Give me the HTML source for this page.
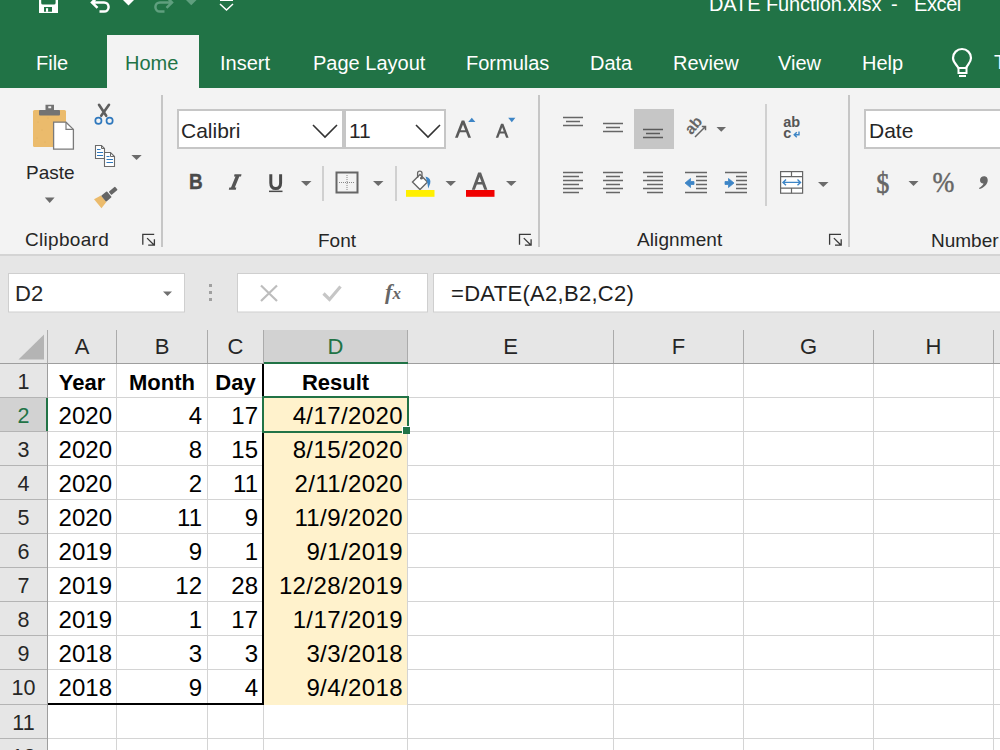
<!DOCTYPE html>
<html><head><meta charset="utf-8">
<style>
*{margin:0;padding:0;box-sizing:border-box}
html,body{width:1000px;height:750px;overflow:hidden;background:#fff;font-family:"Liberation Sans",sans-serif}
.abs{position:absolute}
#title{left:0;top:0;width:1000px;height:88px;background:#217346}
.tab{position:absolute;top:51px;color:#fff;font-size:20px;line-height:24px;white-space:nowrap}
#hometab{left:107px;top:35px;width:92px;height:53px;background:#f3f3f3}
#ribbon{left:0;top:88px;width:1000px;height:167px;background:#f3f3f3;border-bottom:1px solid #d5d5d5}
#fbar{left:0;top:255px;width:1000px;height:75px;background:#e6e6e6}
.box{position:absolute;background:#fff;border:1px solid #c6c6c6}
.lbl{position:absolute;font-size:18px;color:#262626;white-space:nowrap}
.sep{position:absolute;width:2px;background:#c8c8c8}
#grid{left:0;top:330px;width:1000px;height:420px;background:#fff}
.ch{position:absolute;top:330px;height:34px;background:#e6e6e6;border-right:1px solid #c0c0c0;border-bottom:1px solid #bdbdbd;text-align:center;font-size:20px;line-height:34px;color:#262626}
.rh{position:absolute;left:0;width:48px;height:34px;background:#e6e6e6;border-bottom:1px solid #c0c0c0;border-right:1px solid #bdbdbd;text-align:center;font-size:20px;line-height:34px;color:#262626}
.vl{position:absolute;top:364px;bottom:0;width:1px;background:#dadada}
.hl{position:absolute;left:48px;right:0;height:1px;background:#dadada}
.c{position:absolute;height:34px;font-size:21px;line-height:36px;color:#000;white-space:nowrap}
.r{text-align:right}
.hdr{text-align:center;font-size:22px;line-height:34px}
.rhdr{text-align:center;font-size:21.5px;line-height:36px}
.cell{height:34px;font-size:24px;line-height:36px;color:#000;white-space:nowrap}
.b{font-weight:bold;font-size:22px;line-height:37px;letter-spacing:0}
</style></head><body>
<div id="title" class="abs"></div>
<div id="hometab" class="abs"></div>
<div class="tab" style="left:36px">File</div>
<div class="tab" style="left:125px;color:#217346">Home</div>
<div class="tab" style="left:220px">Insert</div>
<div class="tab" style="left:313px">Page Layout</div>
<div class="tab" style="left:466px">Formulas</div>
<div class="tab" style="left:590px">Data</div>
<div class="tab" style="left:673px">Review</div>
<div class="tab" style="left:778px">View</div>
<div class="tab" style="left:862px">Help</div>
<div id="ribbon" class="abs"></div>
<div id="fbar" class="abs"></div>
<div id="grid" class="abs"></div>
<!--RIBBON-->
<svg class="abs" style="left:0;top:0" width="1000" height="330" viewBox="0 0 1000 330">
 <!-- title bar icons -->
 <g fill="#fff">
  <path d="M39,-6 H58 V13 H39 Z M41.2,-6 V3 Q41.2,4.6 42.8,4.6 H54 Q55.6,4.6 55.6,3 V-6 Z M44,7 V11.8 H52 V7 Z" fill-rule="evenodd"/>
  <rect x="46" y="8.2" width="2.1" height="3.6" fill="#fff"/>
 </g>
 <path d="M97.5,-3 L92,2.4 L97.5,7.8 M92.5,2.4 H104 A4.6,4.6 0 0 1 104,11.6 H99.5" stroke="#fff" stroke-width="2.5" fill="none"/>
 <polygon points="123,0 134,0 128.5,5.5" fill="#fff"/>
 <path d="M166.5,-3 L172,2.4 L166.5,7.8 M171.5,2.4 H160 A4.6,4.6 0 0 0 160,11.6 H164.5" stroke="#5f9f7e" stroke-width="2.5" fill="none"/>
 <polygon points="186,0 196.5,0 191.25,5.3" fill="#5f9f7e"/>
 <rect x="220" y="-1" width="13" height="2" fill="#fff"/>
 <path d="M220,4 L226.5,10 L233,4" stroke="#fff" stroke-width="1.5" fill="none"/>
 <!-- lightbulb -->
 <path d="M958.5,68 C956,64 953,62 953,58 A9,9 0 0 1 971,58 C971,62 968,64 966,68 Z" stroke="#fff" stroke-width="2.2" fill="none"/>
 <rect x="958.5" y="68" width="8" height="5" stroke="#fff" stroke-width="2" fill="none"/>
 <rect x="959" y="75" width="7" height="2" fill="#fff"/>
</svg>
<div class="abs" style="left:709px;top:-7px;font-size:20px;color:#fff;white-space:nowrap;letter-spacing:-0.1px">DATE Function.xlsx</div>
<div class="abs" style="left:891px;top:-7px;font-size:20px;color:#fff;white-space:nowrap">-</div>
<div class="abs" style="left:914px;top:-7px;font-size:20px;color:#fff;white-space:nowrap;letter-spacing:-0.4px">Excel</div>
<div class="abs" style="left:994px;top:51px;font-size:20px;color:#fff">T</div>
<!--/RIBBON-->
<!--RIB2-->
<svg class="abs" style="left:0;top:0" width="1000" height="330" viewBox="0 0 1000 330">
 <!-- separators -->
 <rect x="161" y="95" width="2" height="152" fill="#c6c6c6"/>
 <rect x="538" y="95" width="2" height="152" fill="#c6c6c6"/>
 <rect x="848" y="95" width="2" height="152" fill="#c6c6c6"/>
 <rect x="322" y="166" width="2" height="35" fill="#d0d0d0"/>
 <rect x="395" y="166" width="2" height="35" fill="#d0d0d0"/>
 <rect x="765" y="104" width="2" height="102" fill="#d0d0d0"/>
 <!-- ribbon bottom -->
 <rect x="0" y="254" width="1000" height="2" fill="#d4d4d4"/>
 <!-- Paste icon -->
 <rect x="33" y="110" width="33" height="37" rx="1.5" fill="#ebbb6c"/>
 <g fill="#d9a85a" opacity="0.6"><circle cx="38" cy="122" r="0.6"/><circle cx="42" cy="130" r="0.6"/><circle cx="37" cy="138" r="0.6"/><circle cx="45" cy="142" r="0.6"/><circle cx="48" cy="118" r="0.6"/></g>
 <rect x="39" y="110" width="21" height="5.5" rx="1" fill="#737373"/>
 <path d="M45.5,104.8 H54 V110.5 H45.5 Z M48.3,106.3 V108.3 H51.2 V106.3 Z" fill="#737373" fill-rule="evenodd"/>
 <path d="M53.6,122.2 H66 L73.4,129.4 V149.2 H53.6 Z" fill="#fff" stroke="#7a7a7a" stroke-width="1.3"/>
 <path d="M66,122.2 V129.4 H73.4" fill="none" stroke="#7a7a7a" stroke-width="1.2"/>
 <polygon points="44.8,197.5 54.6,197.5 49.7,203" fill="#6b6b6b"/>
 <!-- scissors -->
 <path d="M99,104.8 L106.2,115.8 M109,104.8 L101.2,115.8" stroke="#5f5f5f" stroke-width="2.6" stroke-linecap="round"/>
 <circle cx="98.4" cy="120.7" r="3.1" stroke="#2f78bd" stroke-width="1.7" fill="none"/>
 <circle cx="109.6" cy="120.7" r="3.1" stroke="#2f78bd" stroke-width="1.7" fill="none"/>
 <!-- copy -->
 <path d="M95.5,145.5 H101.5 L104.5,148.5 V158.5 H95.5 Z" fill="#fff" stroke="#6a6a6a" stroke-width="1.1"/>
 <path d="M101.5,145.5 V148.5 H104.5" fill="none" stroke="#6a6a6a" stroke-width="1"/>
 <path d="M104.5,152.5 H110.5 L114.5,156.5 V166.5 H104.5 Z" fill="#fff" stroke="#6a6a6a" stroke-width="1.1"/>
 <path d="M110.5,152.5 V156.5 H114.5" fill="none" stroke="#6a6a6a" stroke-width="1"/>
 <path d="M97,149.5 H100.5 M97,152.5 H103 M97,155.5 H103 M106.5,156.5 H109.5 M106.5,159.5 H113 M106.5,162.5 H113" stroke="#2f78bd" stroke-width="1.1"/>
 <polygon points="131.4,155 141.7,155 136.55,160" fill="#6b6b6b"/>
 <!-- format painter -->
 <g transform="translate(105.8,197) rotate(-40)">
  <path d="M-10.5,-5.8 L-2.8,-4.2 L-2.8,4.2 L-10.5,5.8 Z" fill="#ebbb6c"/>
  <rect x="-2.8" y="-3.9" width="7.3" height="7.8" rx="0.8" fill="#656565"/>
  <rect x="5.6" y="-2.1" width="8.2" height="4.2" rx="0.8" fill="#656565"/>
 </g>
 <!-- dialog launchers -->
 <g stroke="#3a3a3a" stroke-width="1.3" fill="none">
  <path transform="translate(0,0)" d="M142.8,244.8 V234.4 H154.2 M147.1,238.1 L153.8,244.8 M148.2,245.2 H154.4 V239.2"/>
  <path transform="translate(376.7,0)" d="M142.8,244.8 V234.4 H154.2 M147.1,238.1 L153.8,244.8 M148.2,245.2 H154.4 V239.2"/>
  <path transform="translate(686.8,0)" d="M142.8,244.8 V234.4 H154.2 M147.1,238.1 L153.8,244.8 M148.2,245.2 H154.4 V239.2"/>
 </g>
 <!-- font name/size boxes -->
 <rect x="178" y="110" width="165" height="38" fill="#fff" stroke="#c6c6c6" stroke-width="2"/>
 <rect x="345" y="110" width="100" height="38" fill="#fff" stroke="#c6c6c6" stroke-width="2"/>
 <path d="M313,125 L325,137 L337,125" stroke="#333" stroke-width="1.6" fill="none"/>
 <path d="M416,125 L428,137 L440,125" stroke="#333" stroke-width="1.6" fill="none"/>
 <!-- grow/shrink carets -->
 <polygon points="468.2,122 475.4,122 471.8,117.8" fill="#3d85c6"/>
 <polygon points="508.2,117.8 515.4,117.8 511.8,122.2" fill="#3d85c6"/>
 <!-- dropdown arrows row2 -->
 <g fill="#6b6b6b">
  <polygon points="301,181 311.5,181 306.25,186"/>
  <polygon points="373,181 383.5,181 378.25,186"/>
  <polygon points="445.5,181 456,181 450.75,186"/>
  <polygon points="506,181 516.5,181 511.25,186"/>
  <polygon points="716.5,127 726,127 721.25,131.8"/>
  <polygon points="818,182 828.5,182 823.25,187"/>
  <polygon points="908.5,181 918.5,181 913.5,186"/>
 </g>
 <!-- border icon -->
 <rect x="336.5" y="172.5" width="21" height="20" fill="none" stroke="#666" stroke-width="2"/>
 <path d="M347,175 V190 M339,182.5 H355" stroke="#888" stroke-width="1" stroke-dasharray="1,1"/>
 <!-- fill color -->
 <path d="M412.5,182 L420,174.5 L427.5,182 L420,189.5 Z" fill="#fff" stroke="#666" stroke-width="1.4"/>
 <path d="M417.6,178 V173.2 Q417.6,171.2 419.8,171.2 Q422,171.2 422,173.2 V177" stroke="#666" stroke-width="1.3" fill="none"/>
 <circle cx="421.4" cy="178.2" r="1.4" fill="#666"/>
 <path d="M425.5,176.5 Q431.5,178 430.2,183.5 L428.2,188.5 Q427.8,182 425.5,176.5 Z" fill="#3d85c6"/>
 <rect x="406" y="190" width="28.5" height="6.8" fill="#ffef00"/>
 <rect x="466" y="190" width="28.5" height="6.8" fill="#f00000"/>
 <!-- alignment icons -->
 <g stroke="#666" stroke-width="1.3">
  <path d="M563,117.5 H583 M566,121.5 H580 M563,125.5 H583"/>
  <path d="M603,123.5 H623 M606,127.5 H620 M603,131.5 H623"/>
 </g>
 <rect x="634" y="109" width="40" height="40" fill="#c6c6c6"/>
 <g stroke="#5a5a5a" stroke-width="1.3">
  <path d="M643,129.5 H663 M646,133.5 H660 M643,137.5 H663"/>
 </g>
 <g stroke="#666" stroke-width="1.3">
  <path d="M563,172.5 H583 M563,176.5 H579 M563,180.5 H583 M563,184.5 H579 M563,188.5 H583 M563,192.5 H579"/>
  <path d="M603,172.5 H623 M606,176.5 H620 M603,180.5 H623 M606,184.5 H620 M603,188.5 H623 M606,192.5 H620"/>
  <path d="M643,172.5 H663 M647,176.5 H663 M643,180.5 H663 M647,184.5 H663 M643,188.5 H663 M647,192.5 H663"/>
  <path d="M685,172.5 H707 M696,176.5 H707 M696,180.5 H707 M696,184.5 H707 M696,188.5 H707 M685,192.5 H707"/>
  <path d="M725,172.5 H747 M736,176.5 H747 M736,180.5 H747 M736,184.5 H747 M736,188.5 H747 M725,192.5 H747"/>
 </g>
 <path d="M685,183 L690.5,178.5 V181.5 H694 V184.5 H690.5 V187.5 Z" fill="#3d85c6" stroke="#3d85c6" stroke-width="0.8" stroke-linejoin="round"/>
 <path d="M734,183 L728.5,178.5 V181.5 H725 V184.5 H728.5 V187.5 Z" fill="#3d85c6" stroke="#3d85c6" stroke-width="0.8" stroke-linejoin="round"/>
 <!-- orientation -->
 <text x="0" y="0" transform="translate(691.5,135.5) rotate(-50)" font-size="15.5" font-family="Liberation Sans" font-weight="bold" fill="#666">ab</text>
 <path d="M695,137 L705,127 M701.8,126.5 H705.5 V130.2" stroke="#666" stroke-width="1.5" fill="none"/>
 <!-- wrap text -->
 <text x="783.3" y="127.3" font-size="14.5" font-family="Liberation Sans" font-weight="bold" fill="#555">ab</text>
 <text x="783.3" y="137.8" font-size="14.5" font-family="Liberation Sans" font-weight="bold" fill="#555">c</text>
 <path d="M799,131.5 V134.8 H794.5 M796.8,132.3 L794.2,134.8 L796.8,137.3" stroke="#3d85c6" stroke-width="1.4" fill="none"/>
 <!-- merge icon -->
 <rect x="780.6" y="171.6" width="22" height="21.6" fill="#fff" stroke="#666" stroke-width="1.2"/>
 <path d="M780.6,176.6 H802.6 M780.6,188.2 H802.6 M791.5,171.6 V176.6 M791.5,188.2 V193.2" stroke="#666" stroke-width="1.2"/>
 <path d="M783,182.4 H800.5 M786,179.6 L783,182.4 L786,185.2 M797.5,179.6 L800.5,182.4 L797.5,185.2" stroke="#3d85c6" stroke-width="1.4" fill="none"/>
 <!-- number format box -->
 <rect x="865" y="110" width="200" height="38" fill="#fff" stroke="#c6c6c6" stroke-width="2"/>
 <!-- formula bar -->
 <rect x="8.5" y="273.5" width="176" height="38.5" fill="#fff" stroke="#cfcfcf" stroke-width="1"/>
 <polygon points="163,291.5 172,291.5 167.5,296" fill="#707070"/>
 <rect x="209" y="284" width="3" height="3" fill="#a0a0a0"/>
 <rect x="209" y="291" width="3" height="3" fill="#a0a0a0"/>
 <rect x="209" y="298" width="3" height="3" fill="#a0a0a0"/>
 <rect x="237.5" y="273.5" width="190" height="38.5" fill="#fff" stroke="#cfcfcf" stroke-width="1"/>
 <rect x="433.5" y="273.5" width="600" height="38.5" fill="#fff" stroke="#cfcfcf" stroke-width="1"/>
 <path d="M261,285.5 L277,301 M277,285.5 L261,301" stroke="#bdbdbd" stroke-width="2.2" fill="none"/>
 <text x="385" y="299" font-size="22" font-family="Liberation Serif" font-style="italic" font-weight="bold" fill="#666">f</text>
 <text x="392.5" y="299" font-size="17" font-family="Liberation Serif" font-style="italic" font-weight="bold" fill="#666">x</text>
 <path d="M323.5,293.5 L329.5,299.5 L340.5,286.5" stroke="#c6c6c6" stroke-width="3.2" fill="none"/>
</svg>
<div class="abs lbl" style="left:26px;top:162px;font-size:19px">Paste</div>
<div class="abs lbl" style="left:25px;top:229px;font-size:19px;letter-spacing:0.3px">Clipboard</div>
<div class="abs lbl" style="left:181px;top:119px;font-size:21px">Calibri</div>
<div class="abs lbl" style="left:349px;top:119px;font-size:21px">11</div>
<div class="abs lbl" style="left:189px;top:169px;font-size:22px;font-weight:bold;color:#4a4a4a;transform:scaleX(0.86);transform-origin:left;-webkit-text-stroke:0.4px #4a4a4a">B</div>
<div class="abs lbl" style="left:318px;top:230px;font-size:19px">Font</div>
<div class="abs lbl" style="left:637px;top:229px;font-size:19px;letter-spacing:0.1px">Alignment</div>
<div class="abs lbl" style="left:869px;top:119px;font-size:21px">Date</div>
<div class="abs lbl" style="left:931px;top:230px;font-size:19px">Number</div>
<div class="abs lbl" style="left:15px;top:281px;font-size:22px">D2</div>
<div class="abs lbl" style="left:451px;top:281px;font-size:22px;color:#1e1e1e;letter-spacing:0.3px">=DATE(A2,B2,C2)</div>
<!--/RIB2-->
<!--FONTICONS-->
<svg class="abs" style="left:0;top:0" width="1000" height="330" viewBox="0 0 1000 330">
 <path d="M455.00,137.80 L461.70,120.60 L464.30,120.60 L471.00,137.80 L468.21,137.80 L466.07,132.30 L459.93,132.30 L457.79,137.80 Z M460.74,130.22 L463.00,124.43 L465.26,130.22 Z" fill="#5a5a5a" fill-rule="evenodd"/>
 <path d="M495.80,137.80 L501.05,123.80 L503.35,123.80 L508.60,137.80 L506.14,137.80 L504.49,133.40 L499.91,133.40 L498.26,137.80 Z M500.60,131.56 L502.20,127.28 L503.80,131.56 Z" fill="#5a5a5a" fill-rule="evenodd"/>
 <path d="M471.80,189.80 L478.15,172.60 L481.05,172.60 L487.40,189.80 L484.31,189.80 L482.32,184.42 L476.88,184.42 L474.89,189.80 Z M477.73,182.10 L479.60,177.05 L481.47,182.10 Z" fill="#5f5f5f" fill-rule="evenodd"/>
 <path d="M234.5,174.3 H241.5 L241,176.5 H239.3 L234.8,187.5 H236.3 L235.8,189.7 H228.8 L229.3,187.5 H231 L235.5,176.5 H234 Z" fill="#555"/>
 <path d="M270.8,174.3 V183 Q270.8,188.6 275.7,188.6 Q280.6,188.6 280.6,183 V174.3" stroke="#4a4a4a" stroke-width="3" fill="none"/>
 <rect x="269" y="190.6" width="13.5" height="1.5" fill="#4a4a4a"/>
</svg>
<!--/FONTICONS-->
<!--NUMICONS-->
<svg class="abs" style="left:0;top:0" width="1000" height="330" viewBox="0 0 1000 330">
 <text x="0" y="0" transform="translate(876.3,192.5) scale(1.05,1.17)" font-size="25" font-family="Liberation Serif" fill="#666" stroke="#666" stroke-width="0.5">$</text>
 <text x="0" y="0" transform="translate(932.6,192) scale(1.05,1.18)" font-size="25" font-family="Liberation Serif" fill="#666" stroke="#666" stroke-width="0.4">%</text>
 <path d="M984,176.2 C987,176.2 988,178.5 987.7,181 C987.3,184.5 984,187.8 979.5,189 L979,188 C981.5,186.8 983,185 983.5,183.5 C981,183.5 980,182 980,180 C980,177.8 981.8,176.2 984,176.2 Z" fill="#666"/>
</svg>
<!--/NUMICONS-->
<!--GRID-->
<div class="abs" style="left:0;top:330px;width:1000px;height:34px;background:#e6e6e6"></div>
<svg class="abs" style="left:0;top:330px" width="48" height="34"><polygon points="44,4.5 44,29.5 18.5,29.5" fill="#b4b4b4"/></svg>
<div class="abs hdr" style="left:48px;top:330px;width:68px;height:33px;background:#e6e6e6;color:#262626">A</div>
<div class="abs" style="left:116px;top:330px;width:1px;height:34px;background:#ababab"></div>
<div class="abs hdr" style="left:117px;top:330px;width:90px;height:33px;background:#e6e6e6;color:#262626">B</div>
<div class="abs" style="left:207px;top:330px;width:1px;height:34px;background:#ababab"></div>
<div class="abs hdr" style="left:208px;top:330px;width:55px;height:33px;background:#e6e6e6;color:#262626">C</div>
<div class="abs" style="left:263px;top:330px;width:1px;height:34px;background:#ababab"></div>
<div class="abs hdr" style="left:264px;top:330px;width:143px;height:33px;background:#d2d2d2;color:#217346">D</div>
<div class="abs" style="left:407px;top:330px;width:1px;height:34px;background:#ababab"></div>
<div class="abs hdr" style="left:408px;top:330px;width:205px;height:33px;background:#e6e6e6;color:#262626">E</div>
<div class="abs" style="left:613px;top:330px;width:1px;height:34px;background:#ababab"></div>
<div class="abs hdr" style="left:614px;top:330px;width:129px;height:33px;background:#e6e6e6;color:#262626">F</div>
<div class="abs" style="left:743px;top:330px;width:1px;height:34px;background:#ababab"></div>
<div class="abs hdr" style="left:744px;top:330px;width:129px;height:33px;background:#e6e6e6;color:#262626">G</div>
<div class="abs" style="left:873px;top:330px;width:1px;height:34px;background:#ababab"></div>
<div class="abs hdr" style="left:874px;top:330px;width:119px;height:33px;background:#e6e6e6;color:#262626">H</div>
<div class="abs" style="left:993px;top:330px;width:1px;height:34px;background:#ababab"></div>
<div class="abs hdr" style="left:994px;top:330px;width:106px;height:33px;background:#e6e6e6;color:#262626">I</div>
<div class="abs" style="left:1100px;top:330px;width:1px;height:34px;background:#ababab"></div>
<div class="abs" style="left:47px;top:330px;width:1px;height:34px;background:#ababab"></div>
<div class="abs" style="left:0;top:363px;width:1000px;height:1px;background:#9e9e9e"></div>
<div class="abs" style="left:264px;top:362px;width:144px;height:2px;background:#217346"></div>
<div class="abs rhdr" style="left:0;top:364px;width:47px;height:33px;background:#e6e6e6;color:#262626">1</div>
<div class="abs" style="left:0;top:397px;width:47px;height:1px;background:#b4b4b4"></div>
<div class="abs rhdr" style="left:0;top:398px;width:47px;height:33px;background:#d2d2d2;color:#217346">2</div>
<div class="abs" style="left:0;top:431px;width:47px;height:1px;background:#b4b4b4"></div>
<div class="abs rhdr" style="left:0;top:432px;width:47px;height:33px;background:#e6e6e6;color:#262626">3</div>
<div class="abs" style="left:0;top:465px;width:47px;height:1px;background:#b4b4b4"></div>
<div class="abs rhdr" style="left:0;top:466px;width:47px;height:33px;background:#e6e6e6;color:#262626">4</div>
<div class="abs" style="left:0;top:499px;width:47px;height:1px;background:#b4b4b4"></div>
<div class="abs rhdr" style="left:0;top:500px;width:47px;height:33px;background:#e6e6e6;color:#262626">5</div>
<div class="abs" style="left:0;top:533px;width:47px;height:1px;background:#b4b4b4"></div>
<div class="abs rhdr" style="left:0;top:534px;width:47px;height:33px;background:#e6e6e6;color:#262626">6</div>
<div class="abs" style="left:0;top:567px;width:47px;height:1px;background:#b4b4b4"></div>
<div class="abs rhdr" style="left:0;top:568px;width:47px;height:33px;background:#e6e6e6;color:#262626">7</div>
<div class="abs" style="left:0;top:601px;width:47px;height:1px;background:#b4b4b4"></div>
<div class="abs rhdr" style="left:0;top:602px;width:47px;height:33px;background:#e6e6e6;color:#262626">8</div>
<div class="abs" style="left:0;top:635px;width:47px;height:1px;background:#b4b4b4"></div>
<div class="abs rhdr" style="left:0;top:636px;width:47px;height:33px;background:#e6e6e6;color:#262626">9</div>
<div class="abs" style="left:0;top:669px;width:47px;height:1px;background:#b4b4b4"></div>
<div class="abs rhdr" style="left:0;top:670px;width:47px;height:34px;background:#e6e6e6;color:#262626">10</div>
<div class="abs" style="left:0;top:704px;width:47px;height:1px;background:#b4b4b4"></div>
<div class="abs rhdr" style="left:0;top:705px;width:47px;height:33px;background:#e6e6e6;color:#262626">11</div>
<div class="abs" style="left:0;top:738px;width:47px;height:1px;background:#b4b4b4"></div>
<div class="abs rhdr" style="left:0;top:739px;width:47px;height:33px;background:#e6e6e6;color:#262626">12</div>
<div class="abs" style="left:0;top:772px;width:47px;height:1px;background:#b4b4b4"></div>
<div class="abs rhdr" style="left:0;top:773px;width:47px;height:33px;background:#e6e6e6;color:#262626">13</div>
<div class="abs" style="left:0;top:806px;width:47px;height:1px;background:#b4b4b4"></div>
<div class="abs" style="left:47px;top:364px;width:1px;height:400px;background:#9e9e9e"></div>
<div class="abs" style="left:46px;top:398px;width:2px;height:33px;background:#217346"></div>
<div class="abs" style="left:116px;top:364px;width:1px;height:400px;background:#d4d4d4"></div>
<div class="abs" style="left:207px;top:364px;width:1px;height:400px;background:#d4d4d4"></div>
<div class="abs" style="left:263px;top:364px;width:1px;height:400px;background:#d4d4d4"></div>
<div class="abs" style="left:407px;top:364px;width:1px;height:400px;background:#d4d4d4"></div>
<div class="abs" style="left:613px;top:364px;width:1px;height:400px;background:#d4d4d4"></div>
<div class="abs" style="left:743px;top:364px;width:1px;height:400px;background:#d4d4d4"></div>
<div class="abs" style="left:873px;top:364px;width:1px;height:400px;background:#d4d4d4"></div>
<div class="abs" style="left:993px;top:364px;width:1px;height:400px;background:#d4d4d4"></div>
<div class="abs" style="left:1100px;top:364px;width:1px;height:400px;background:#d4d4d4"></div>
<div class="abs" style="left:48px;top:397px;width:952px;height:1px;background:#d4d4d4"></div>
<div class="abs" style="left:48px;top:431px;width:952px;height:1px;background:#d4d4d4"></div>
<div class="abs" style="left:48px;top:465px;width:952px;height:1px;background:#d4d4d4"></div>
<div class="abs" style="left:48px;top:499px;width:952px;height:1px;background:#d4d4d4"></div>
<div class="abs" style="left:48px;top:533px;width:952px;height:1px;background:#d4d4d4"></div>
<div class="abs" style="left:48px;top:567px;width:952px;height:1px;background:#d4d4d4"></div>
<div class="abs" style="left:48px;top:601px;width:952px;height:1px;background:#d4d4d4"></div>
<div class="abs" style="left:48px;top:635px;width:952px;height:1px;background:#d4d4d4"></div>
<div class="abs" style="left:48px;top:669px;width:952px;height:1px;background:#d4d4d4"></div>
<div class="abs" style="left:48px;top:704px;width:952px;height:1px;background:#d4d4d4"></div>
<div class="abs" style="left:48px;top:738px;width:952px;height:1px;background:#d4d4d4"></div>
<div class="abs" style="left:48px;top:772px;width:952px;height:1px;background:#d4d4d4"></div>
<div class="abs" style="left:48px;top:806px;width:952px;height:1px;background:#d4d4d4"></div>
<div class="abs" style="left:264px;top:398px;width:143px;height:307px;background:#fff2cc"></div>
<div class="abs" style="left:262px;top:364px;width:2px;height:341px;background:#000"></div>
<div class="abs" style="left:48px;top:703px;width:216px;height:2px;background:#000"></div>
<div class="abs cell b" style="left:48px;top:364px;width:68px;text-align:center">Year</div>
<div class="abs cell b" style="left:117px;top:364px;width:90px;text-align:center">Month</div>
<div class="abs cell b" style="left:208px;top:364px;width:55px;text-align:center">Day</div>
<div class="abs cell b" style="left:264px;top:364px;width:143px;text-align:center">Result</div>
<div class="abs cell" style="left:48px;top:398px;width:64px;text-align:right">2020</div>
<div class="abs cell" style="left:117px;top:398px;width:85px;text-align:right">4</div>
<div class="abs cell" style="left:208px;top:398px;width:50px;text-align:right">17</div>
<div class="abs cell" style="left:264px;top:398px;width:139px;text-align:right;letter-spacing:0.4px">4/17/2020</div>
<div class="abs cell" style="left:48px;top:432px;width:64px;text-align:right">2020</div>
<div class="abs cell" style="left:117px;top:432px;width:85px;text-align:right">8</div>
<div class="abs cell" style="left:208px;top:432px;width:50px;text-align:right">15</div>
<div class="abs cell" style="left:264px;top:432px;width:139px;text-align:right;letter-spacing:0.4px">8/15/2020</div>
<div class="abs cell" style="left:48px;top:466px;width:64px;text-align:right">2020</div>
<div class="abs cell" style="left:117px;top:466px;width:85px;text-align:right">2</div>
<div class="abs cell" style="left:208px;top:466px;width:50px;text-align:right">11</div>
<div class="abs cell" style="left:264px;top:466px;width:139px;text-align:right;letter-spacing:0.4px">2/11/2020</div>
<div class="abs cell" style="left:48px;top:500px;width:64px;text-align:right">2020</div>
<div class="abs cell" style="left:117px;top:500px;width:85px;text-align:right">11</div>
<div class="abs cell" style="left:208px;top:500px;width:50px;text-align:right">9</div>
<div class="abs cell" style="left:264px;top:500px;width:139px;text-align:right;letter-spacing:0.4px">11/9/2020</div>
<div class="abs cell" style="left:48px;top:534px;width:64px;text-align:right">2019</div>
<div class="abs cell" style="left:117px;top:534px;width:85px;text-align:right">9</div>
<div class="abs cell" style="left:208px;top:534px;width:50px;text-align:right">1</div>
<div class="abs cell" style="left:264px;top:534px;width:139px;text-align:right;letter-spacing:0.4px">9/1/2019</div>
<div class="abs cell" style="left:48px;top:568px;width:64px;text-align:right">2019</div>
<div class="abs cell" style="left:117px;top:568px;width:85px;text-align:right">12</div>
<div class="abs cell" style="left:208px;top:568px;width:50px;text-align:right">28</div>
<div class="abs cell" style="left:264px;top:568px;width:139px;text-align:right;letter-spacing:0.4px">12/28/2019</div>
<div class="abs cell" style="left:48px;top:602px;width:64px;text-align:right">2019</div>
<div class="abs cell" style="left:117px;top:602px;width:85px;text-align:right">1</div>
<div class="abs cell" style="left:208px;top:602px;width:50px;text-align:right">17</div>
<div class="abs cell" style="left:264px;top:602px;width:139px;text-align:right;letter-spacing:0.4px">1/17/2019</div>
<div class="abs cell" style="left:48px;top:636px;width:64px;text-align:right">2018</div>
<div class="abs cell" style="left:117px;top:636px;width:85px;text-align:right">3</div>
<div class="abs cell" style="left:208px;top:636px;width:50px;text-align:right">3</div>
<div class="abs cell" style="left:264px;top:636px;width:139px;text-align:right;letter-spacing:0.4px">3/3/2018</div>
<div class="abs cell" style="left:48px;top:670px;width:64px;text-align:right">2018</div>
<div class="abs cell" style="left:117px;top:670px;width:85px;text-align:right">9</div>
<div class="abs cell" style="left:208px;top:670px;width:50px;text-align:right">4</div>
<div class="abs cell" style="left:264px;top:670px;width:139px;text-align:right;letter-spacing:0.4px">9/4/2018</div>
<div class="abs" style="left:262px;top:396px;width:147px;height:37px;border:2px solid #217346"></div>
<div class="abs" style="left:402px;top:426px;width:8px;height:8px;background:#217346;border-left:1px solid #fff;border-top:1px solid #fff"></div>
<!--/GRID-->
</body></html>
